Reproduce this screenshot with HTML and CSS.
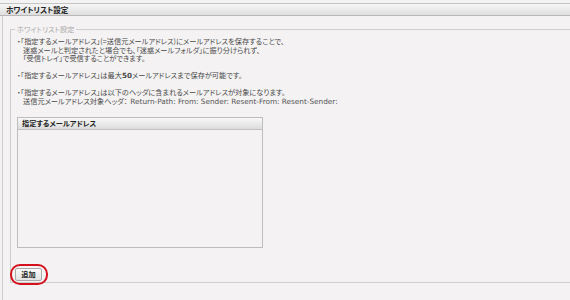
FILE: index.html
```html
<!DOCTYPE html>
<html lang="ja">
<head>
<meta charset="utf-8">
<link rel="stylesheet" href="styles.css">
</head>
<body>
<div class="header">ホワイトリスト設定</div>
<div class="main">
  <fieldset class="box">
    <legend class="legend">ホワイトリスト設定</legend>
    <p class="para">・「指定するメールアドレス」(=送信元メールアドレス)にメールアドレスを保存することで、<br><span class="ind">迷惑メールと判定されたと場合でも、「迷惑メールフォルダ」に振り分けられず、</span><br><span class="ind">「受信トレイ」で受信することができます。</span></p>
    <p class="para">・「指定するメールアドレス」は最大<b class="num">50</b>メールアドレスまで保存が可能です。</p>
    <p class="para">・「指定するメールアドレス」は以下のヘッダに含まれるメールアドレスが対象になります。<br><span class="ind">送信元メールアドレス対象ヘッダ：<span class="hdrs">Return-Path: From: Sender: Resent-From: Resent-Sender:</span></span></p>
    <div class="table">
      <div class="thead">指定するメールアドレス</div>
      <div class="tbody"></div>
    </div>
    <div class="actions">
      <span class="mark"><button class="btn" type="button">追加</button></span>
    </div>
  </fieldset>
</div>
</body>
</html>
```
FILE: styles.css
```css
html, body {
  margin: 0;
  padding: 0;
}
body {
  background: #f4f2f3;
  font-family: "Noto Sans CJK JP", "Noto Sans", sans-serif;
  font-size: 7.2px;
  color: #4a4a4a;
  width: 570px;
  height: 300px;
  overflow: hidden;
  font-feature-settings: "palt";
}
.header {
  margin-top: 3px;
  height: 11px;
  border-top: 1px solid #c4c4c4;
  border-bottom: 1px solid #b8b8b8;
  background: linear-gradient(#f6f6f6, #dedede);
  font-weight: bold;
  font-size: 7.5px;
  color: #222;
  line-height: 11px;
  padding-left: 6px;
}
.main {
  margin-left: 2px;
  border-left: 1px solid #d0d0d0;
  height: 290px;
  padding-left: 7px;
  padding-top: 8px;
}
.box {
  margin: 0 -20px 0 0;
  border: 1px solid #cfcfcf;
  padding: 0 0 0 6px;
  height: 259px;
  box-sizing: border-box;
  min-width: 0;
}
.legend {
  color: #aaa;
  padding: 0 2px;
  margin-left: -2px;
  line-height: 10px;
}
.para {
  margin: 3px 0 8px 0;
  line-height: 8.5px;
}
.ind {
  padding-left: 6px;
}
.num {
  font-family: "DejaVu Sans", sans-serif;
  font-weight: bold;
}
.hdrs {
  font-family: "DejaVu Sans", sans-serif;
  font-size: 7.3px;
  color: #555;
  padding-left: 3px;
}
.table {
  width: 244px;
  height: 129px;
  border: 1px solid #bdbdbd;
  margin-top: 11px;
  display: flex;
  flex-direction: column;
}
.thead {
  height: 11px;
  line-height: 11px;
  background: linear-gradient(#f8f8f8, #dcdcdc);
  border-bottom: 1px solid #c2c2c2;
  font-weight: bold;
  color: #222;
  padding-left: 4px;
}
.tbody {
  flex: 1;
}
.actions {
  margin-top: 16px;
  margin-left: -7px;
}
.mark {
  display: inline-block;
  border: 2px solid #d4101c;
  border-radius: 10px;
  padding: 2px 4px 2px 3px;
}
.btn {
  display: block;
  font: inherit;
  font-weight: bold;
  color: #222;
  background: linear-gradient(#fafafa, #e2e2e2);
  border: 1px solid #aaa;
  border-radius: 2px;
  padding: 0 5px;
  width: 27px;
  height: 13px;
  line-height: 11px;
}
```
